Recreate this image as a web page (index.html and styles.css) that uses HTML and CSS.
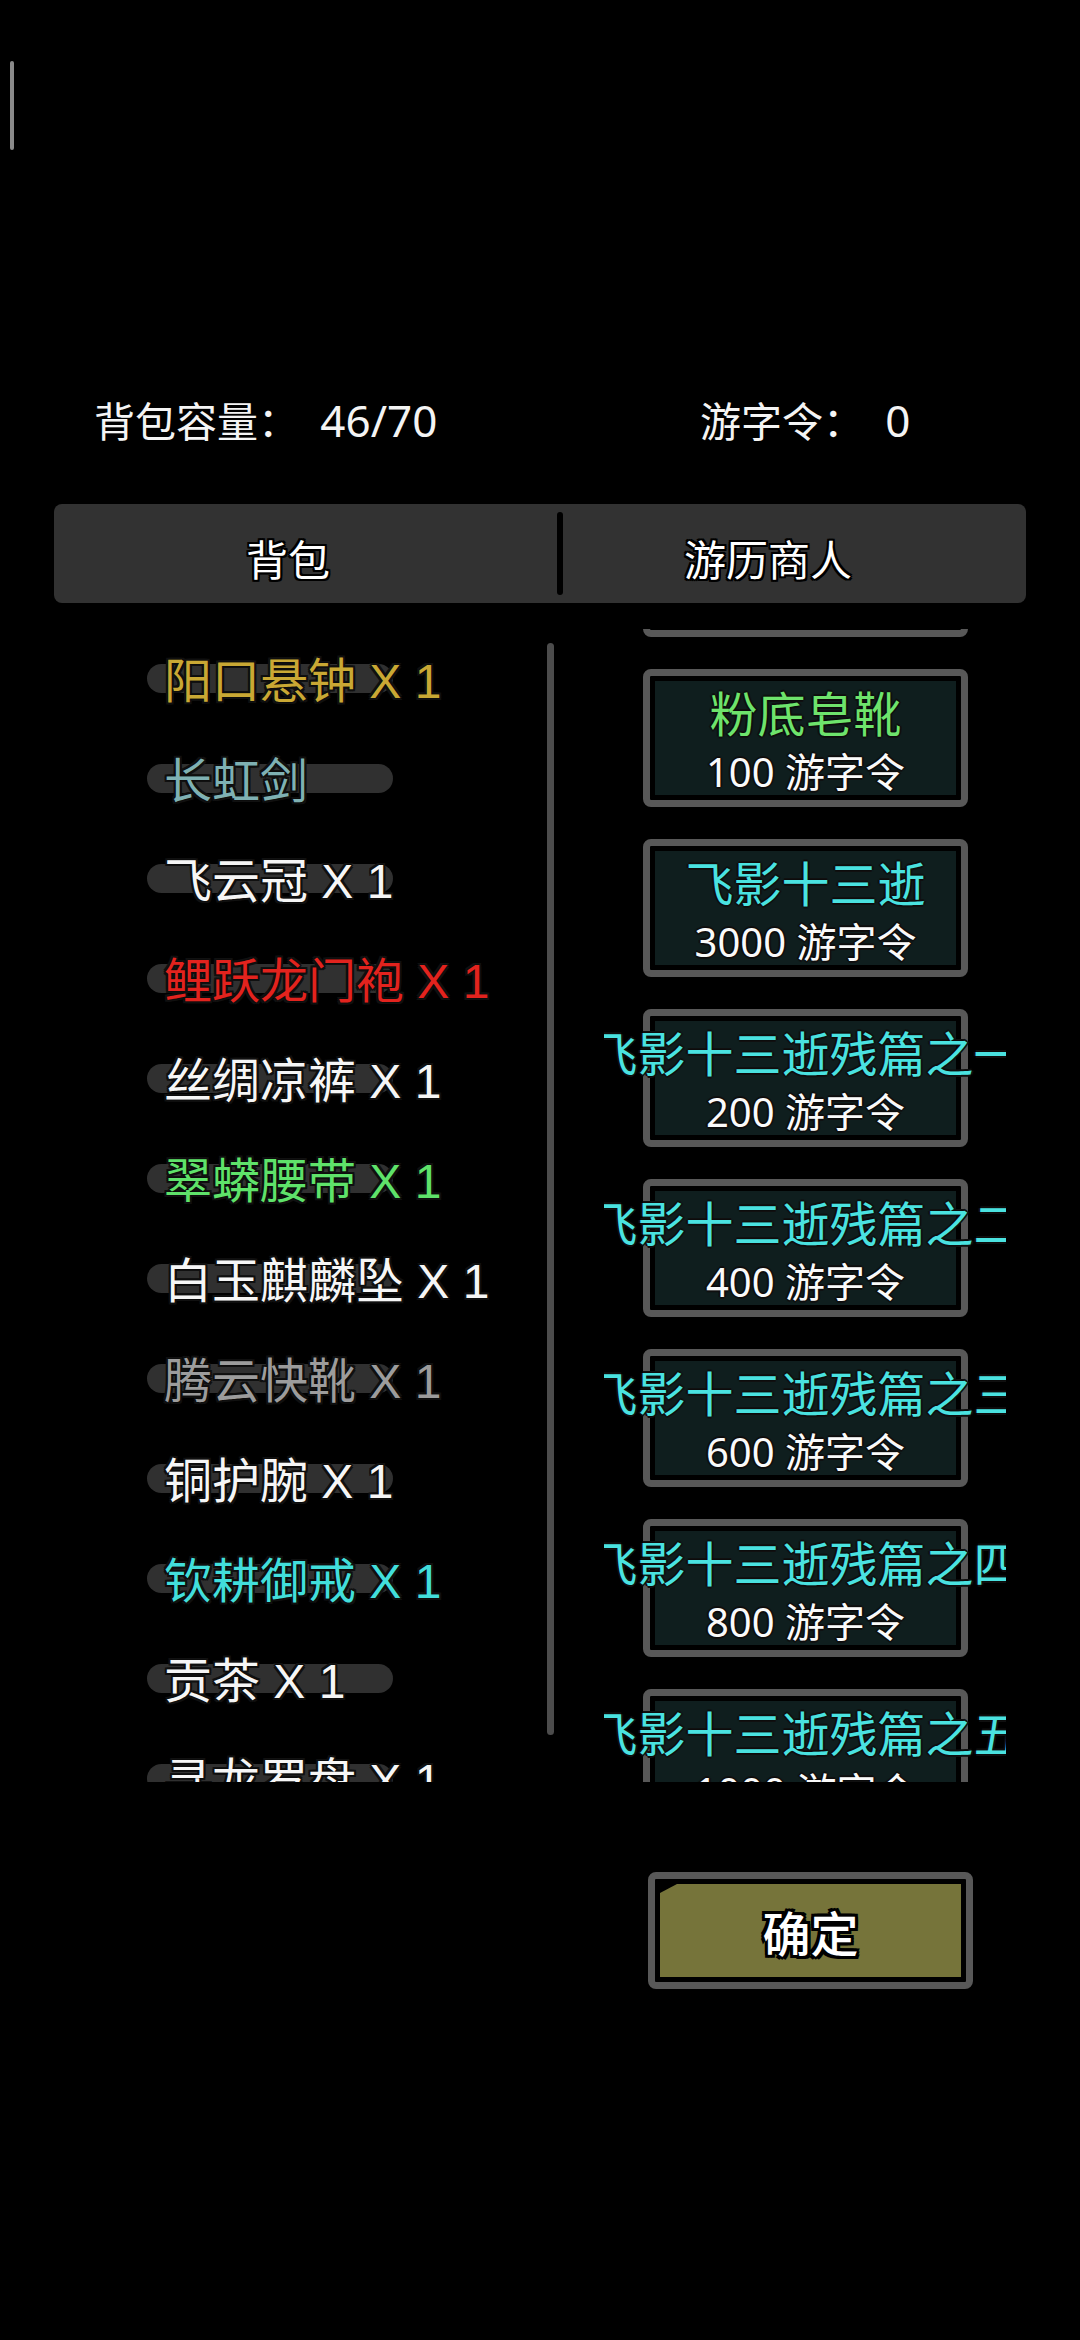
FILE: index.html
```
<!DOCTYPE html>
<html lang="zh-CN">
<head>
<meta charset="utf-8">
<title>背包</title>
<link rel="stylesheet" href="styles.css">
</head>
<body>
<div class="screen">
  <div class="caret"></div>
  <div class="stats">
    <span class="stat stat-cap">背包容量：&nbsp;&nbsp;<span class="num">46/70</span></span>
    <span class="stat stat-coin">游字令：&nbsp;&nbsp;<span class="num">0</span></span>
  </div>
  <div class="tabs">
    <div class="tab tab-bag">背包</div>
    <div class="tab-sep"></div>
    <div class="tab tab-shop">游历商人</div>
  </div>
  <div class="main">
    <div class="bag">
      <div class="item"><span class="pill"></span><span class="name c-gold">阳口悬钟 X 1</span></div>
      <div class="item"><span class="pill"></span><span class="name c-steel">长虹剑</span></div>
      <div class="item"><span class="pill"></span><span class="name">飞云冠 X 1</span></div>
      <div class="item"><span class="pill"></span><span class="name c-red">鲤跃龙门袍 X 1</span></div>
      <div class="item"><span class="pill"></span><span class="name">丝绸凉裤 X 1</span></div>
      <div class="item"><span class="pill"></span><span class="name c-green">翠蟒腰带 X 1</span></div>
      <div class="item"><span class="pill"></span><span class="name">白玉麒麟坠 X 1</span></div>
      <div class="item"><span class="pill"></span><span class="name c-gray">腾云快靴 X 1</span></div>
      <div class="item"><span class="pill"></span><span class="name">铜护腕 X 1</span></div>
      <div class="item"><span class="pill"></span><span class="name c-cyan">钦耕御戒 X 1</span></div>
      <div class="item"><span class="pill"></span><span class="name">贡茶 X 1</span></div>
      <div class="item"><span class="pill"></span><span class="name">寻龙罗盘 X 1</span></div>
    </div>
    <div class="scrollbar"></div>
    <div class="shop">
      <div class="cards">
        <div class="card"></div>
        <div class="card"><span class="card-name c-lime">粉底皂靴</span><span class="card-price">100 游字令</span></div>
        <div class="card"><span class="card-name c-aqua">飞影十三逝</span><span class="card-price">3000 游字令</span></div>
        <div class="card"><span class="card-name c-aqua">飞影十三逝残篇之一</span><span class="card-price">200 游字令</span></div>
        <div class="card"><span class="card-name c-aqua">飞影十三逝残篇之二</span><span class="card-price">400 游字令</span></div>
        <div class="card"><span class="card-name c-aqua">飞影十三逝残篇之三</span><span class="card-price">600 游字令</span></div>
        <div class="card"><span class="card-name c-aqua">飞影十三逝残篇之四</span><span class="card-price">800 游字令</span></div>
        <div class="card"><span class="card-name c-aqua">飞影十三逝残篇之五</span><span class="card-price">1000 游字令</span></div>
      </div>
    </div>
  </div>
  <div class="confirm"><div class="confirm-fill">确定</div></div>
</div>
</body>
</html>
```
FILE: styles.css
```
html, body {
  margin: 0;
  padding: 0;
  background: #000;
}
body {
  font-family: "Noto Sans", "Noto Sans CJK SC", sans-serif;
  color: #f4f4f4;
}
.screen {
  width: 1080px;
  height: 2340px;
  overflow: hidden;
}
.caret {
  width: 4px;
  height: 89px;
  margin: 61px 0 0 10px;
  background: #8a8a8a;
  border-radius: 2px;
}
.stats {
  display: flex;
  margin-top: 240px;
  padding-left: 94px;
  height: 60px;
  line-height: 60px;
  font-size: 41px;
  white-space: nowrap;
}
.stat {
  text-shadow: 0 0 2px #000, 2px 0 0 #000, -2px 0 0 #000, 0 2px 0 #000, 0 -2px 0 #000;
}
.num {
  font-size: 44px;
}
.stat-cap {
  width: 606px;
}
.tabs {
  display: flex;
  margin: 54px 54px 0;
  height: 99px;
  background: #323232;
  border-radius: 8px;
}
.tab {
  box-sizing: border-box;
  height: 99px;
  padding-top: 13px;
  line-height: 86px;
  font-size: 42px;
  text-align: center;
  color: #fff;
  text-shadow: 0 0 2px #000, 2px 0 0 #000, -2px 0 0 #000, 0 2px 0 #000, 0 -2px 0 #000,
    2px 2px 0 #000, -2px -2px 0 #000, 2px -2px 0 #000, -2px 2px 0 #000;
}
.tab-bag {
  width: 468px;
}
.tab-sep {
  width: 6px;
  height: 83px;
  margin: 8px 0 0 35px;
  background: #000;
  border-radius: 3px;
}
.tab-shop {
  width: 410px;
}
.main {
  display: flex;
  margin-top: 26px;
  height: 1153px;
  padding-left: 147px;
}
.bag {
  box-sizing: border-box;
  width: 400px;
  height: 1153px;
  padding-top: 3px;
  overflow: hidden;
}
.item {
  display: grid;
  height: 100px;
  align-items: center;
  justify-items: start;
}
.pill, .name {
  grid-area: 1 / 1;
}
.pill {
  width: 246px;
  height: 29px;
  margin-bottom: 8px;
  border-radius: 15px;
  background: #303030;
}
.name {
  margin-left: 17px;
  font-family: "Liberation Sans", "Noto Sans CJK SC", sans-serif;
  font-size: 48px;
  line-height: 60px;
  white-space: nowrap;
  color: #f6f6f6;
  text-shadow: 0 0 2px #000, 2px 0 0 #111, -2px 0 0 #111, 0 2px 0 #111, 0 -2px 0 #111,
    2px 2px 0 #111, -2px -2px 0 #111, 2px -2px 0 #111, -2px 2px 0 #111;
}
.c-gold { color: #c9a834; }
.c-steel { color: #7fb1b3; }
.c-red { color: #e2231e; }
.c-green { color: #5fe26a; }
.c-gray { color: #9c9c9c; }
.c-cyan { color: #42dedb; }
.c-lime { color: #6ee36c; }
.c-aqua { color: #4ae2e0; }
.scrollbar {
  width: 7px;
  height: 1092px;
  margin-top: 14px;
  background: #4c4c4c;
  border-radius: 4px;
}
.shop {
  width: 402px;
  height: 1153px;
  margin-left: 50px;
  overflow: hidden;
}
.cards {
  display: flex;
  flex-direction: column;
  gap: 32px;
  margin-top: -130px;
  padding-left: 39px;
}
.card {
  box-sizing: border-box;
  width: 325px;
  height: 138px;
  flex: 0 0 138px;
  border: 7px solid #585858;
  border-radius: 8px;
  background: #0f1e1e;
  box-shadow: inset 0 0 0 5px #000;
  display: flex;
  flex-direction: column;
  align-items: center;
}
.card-name {
  margin-top: 8px;
  font-size: 48px;
  line-height: 60px;
  white-space: nowrap;
  text-shadow: 0 0 2px #000, 2px 0 0 #111, -2px 0 0 #111, 0 2px 0 #111, 0 -2px 0 #111;
}
.card-price {
  font-size: 40px;
  line-height: 56px;
  white-space: nowrap;
  color: #fafafa;
  text-shadow: 0 0 2px #000, 2px 0 0 #111, -2px 0 0 #111, 0 2px 0 #111, 0 -2px 0 #111;
}
.confirm {
  box-sizing: border-box;
  width: 325px;
  height: 117px;
  margin: 90px 0 0 648px;
  padding: 5px;
  border: 7px solid #585858;
  border-radius: 8px;
  background: #000;
}
.confirm-fill {
  height: 93px;
  background: #76743a;
  clip-path: polygon(17px 0, 100% 0, 100% 100%, 0 100%, 0 9px);
  display: flex;
  align-items: center;
  justify-content: center;
  font-size: 48px;
  font-weight: 500;
  color: #fff;
  text-shadow: 0 0 3px #000, 3px 0 0 #000, -3px 0 0 #000, 0 3px 0 #000, 0 -3px 0 #000,
    3px 3px 0 #000, -3px -3px 0 #000, 3px -3px 0 #000, -3px 3px 0 #000;
}
```
